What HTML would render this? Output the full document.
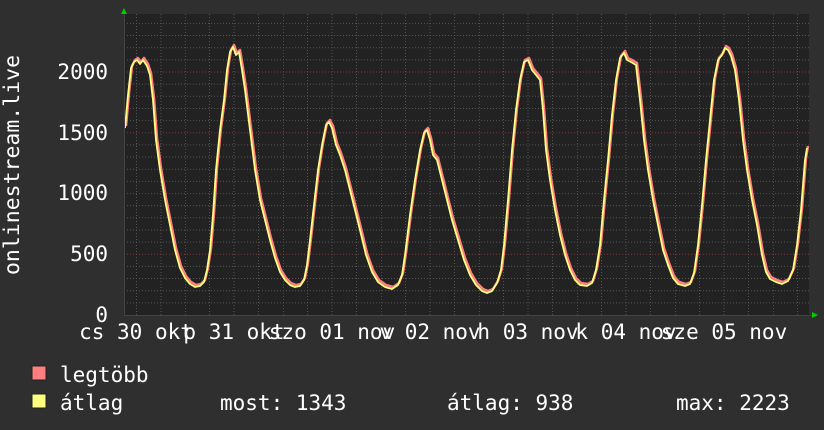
<!DOCTYPE html>
<html><head><meta charset="utf-8"><style>
html,body{margin:0;padding:0;background:#2f2f2f;width:824px;height:430px;overflow:hidden}
text{font-family:"DejaVu Sans Mono","Liberation Mono",monospace;fill:#fff;font-size:21px}
</style></head><body>
<svg width="824" height="430" xmlns="http://www.w3.org/2000/svg">
<rect x="0" y="0" width="824" height="430" fill="#2f2f2f"/>
<rect x="124" y="14" width="685" height="301" fill="#222222"/>
<g stroke="#555" stroke-width="1" stroke-dasharray="1,2">
<line x1="124" x2="809" y1="302.85" y2="302.85"/><line x1="124" x2="809" y1="290.7" y2="290.7"/><line x1="124" x2="809" y1="278.55" y2="278.55"/><line x1="124" x2="809" y1="266.4" y2="266.4"/>
<line x1="124" x2="809" y1="242.1" y2="242.1"/><line x1="124" x2="809" y1="229.95" y2="229.95"/><line x1="124" x2="809" y1="217.8" y2="217.8"/><line x1="124" x2="809" y1="205.65" y2="205.65"/>
<line x1="124" x2="809" y1="181.35" y2="181.35"/><line x1="124" x2="809" y1="169.2" y2="169.2"/><line x1="124" x2="809" y1="157.05" y2="157.05"/><line x1="124" x2="809" y1="144.9" y2="144.9"/>
<line x1="124" x2="809" y1="120.6" y2="120.6"/><line x1="124" x2="809" y1="108.45" y2="108.45"/><line x1="124" x2="809" y1="96.3" y2="96.3"/><line x1="124" x2="809" y1="84.15" y2="84.15"/>
<line x1="124" x2="809" y1="59.85" y2="59.85"/><line x1="124" x2="809" y1="47.7" y2="47.7"/><line x1="124" x2="809" y1="35.55" y2="35.55"/><line x1="124" x2="809" y1="23.4" y2="23.4"/>
<line y1="14" y2="315" x1="136.5" x2="136.5"/><line y1="14" y2="315" x1="161" x2="161"/><line y1="14" y2="315" x1="209.5" x2="209.5"/><line y1="14" y2="315" x1="234" x2="234"/><line y1="14" y2="315" x1="258.5" x2="258.5"/>
<line y1="14" y2="315" x1="307.5" x2="307.5"/><line y1="14" y2="315" x1="332" x2="332"/><line y1="14" y2="315" x1="356.5" x2="356.5"/>
<line y1="14" y2="315" x1="405.5" x2="405.5"/><line y1="14" y2="315" x1="430" x2="430"/><line y1="14" y2="315" x1="454.5" x2="454.5"/>
<line y1="14" y2="315" x1="503.5" x2="503.5"/><line y1="14" y2="315" x1="528" x2="528"/><line y1="14" y2="315" x1="552.5" x2="552.5"/>
<line y1="14" y2="315" x1="601.5" x2="601.5"/><line y1="14" y2="315" x1="626" x2="626"/><line y1="14" y2="315" x1="650.5" x2="650.5"/>
<line y1="14" y2="315" x1="699.5" x2="699.5"/><line y1="14" y2="315" x1="724" x2="724"/><line y1="14" y2="315" x1="748.5" x2="748.5"/>
<line y1="14" y2="315" x1="797.5" x2="797.5"/>
</g>
<g stroke="#7a3a3a" stroke-width="1" stroke-dasharray="1,2">
<line x1="124" x2="809" y1="254.25" y2="254.25"/><line x1="124" x2="809" y1="193.5" y2="193.5"/><line x1="124" x2="809" y1="132.75" y2="132.75"/><line x1="124" x2="809" y1="72" y2="72"/>
<line y1="14" y2="315" x1="185.5" x2="185.5"/><line y1="14" y2="315" x1="283.5" x2="283.5"/><line y1="14" y2="315" x1="381.5" x2="381.5"/><line y1="14" y2="315" x1="479.5" x2="479.5"/><line y1="14" y2="315" x1="577.5" x2="577.5"/><line y1="14" y2="315" x1="675.5" x2="675.5"/><line y1="14" y2="315" x1="773.5" x2="773.5"/>
</g>
<g fill="none" stroke-linejoin="round">
<polyline stroke="#ff7f7f" stroke-width="2.5" transform="translate(1,-2)" points="125,128 128,95 131,68 134,62 137,60 140,64 143,60 147,66 150,75 153,100 156,140 160,170 165,200 170,225 175,250 180,268 185,278 190,284 195,287 200,286 204,282 207,270 210,250 213,215 216,170 220,130 224,100 227,70 230,52 233,47 236,55 239,52 242,70 245,90 250,130 255,170 260,200 265,220 270,240 275,258 280,272 285,280 290,285 295,287 300,286 304,280 307,265 310,240 314,205 318,170 322,145 326,125 329,122 332,128 336,145 340,155 345,170 350,190 355,210 360,230 366,255 372,272 378,282 385,287 392,289 398,285 402,275 405,255 410,215 415,180 420,150 424,133 427,130 430,140 433,155 437,160 442,180 447,200 452,220 458,240 464,260 470,275 476,285 482,291 487,293 492,291 497,283 501,270 504,245 508,200 512,150 516,110 520,80 524,62 528,60 532,70 536,75 540,80 543,110 546,150 550,180 555,210 560,235 565,255 570,270 575,280 580,285 587,286 592,283 596,270 600,245 604,200 608,160 612,115 616,80 620,58 624,53 627,60 631,62 636,65 640,100 644,140 648,170 653,200 658,225 663,250 668,265 673,278 678,284 685,286 690,284 694,273 698,245 702,205 706,160 710,120 714,80 718,60 722,55 725,48 728,50 731,56 735,70 739,100 743,140 747,170 752,200 757,225 762,255 766,272 770,279 776,282 782,284 788,281 793,270 797,245 801,210 805,160 807,148"/>
<polyline stroke="#ffff7f" stroke-width="1.8" points="125,128 128,95 131,68 134,62 137,60 140,64 143,60 147,66 150,75 153,100 156,140 160,170 165,200 170,225 175,250 180,268 185,278 190,284 195,287 200,286 204,282 207,270 210,250 213,215 216,170 220,130 224,100 227,70 230,52 233,47 236,55 239,52 242,70 245,90 250,130 255,170 260,200 265,220 270,240 275,258 280,272 285,280 290,285 295,287 300,286 304,280 307,265 310,240 314,205 318,170 322,145 326,125 329,122 332,128 336,145 340,155 345,170 350,190 355,210 360,230 366,255 372,272 378,282 385,287 392,289 398,285 402,275 405,255 410,215 415,180 420,150 424,133 427,130 430,140 433,155 437,160 442,180 447,200 452,220 458,240 464,260 470,275 476,285 482,291 487,293 492,291 497,283 501,270 504,245 508,200 512,150 516,110 520,80 524,62 528,60 532,70 536,75 540,80 543,110 546,150 550,180 555,210 560,235 565,255 570,270 575,280 580,285 587,286 592,283 596,270 600,245 604,200 608,160 612,115 616,80 620,58 624,53 627,60 631,62 636,65 640,100 644,140 648,170 653,200 658,225 663,250 668,265 673,278 678,284 685,286 690,284 694,273 698,245 702,205 706,160 710,120 714,80 718,60 722,55 725,48 728,50 731,56 735,70 739,100 743,140 747,170 752,200 757,225 762,255 766,272 770,279 776,282 782,284 788,281 793,270 797,245 801,210 805,160 807,148"/>
</g>
<line x1="124" x2="812" y1="315.5" y2="315.5" stroke="#444"/>
<line x1="124.5" x2="124.5" y1="12" y2="315" stroke="#444"/>
<polygon points="121,14 124,8 127,14" fill="#00cc00"/>
<polygon points="812,312 818,315 812,318" fill="#00cc00"/>
<g text-anchor="end">
<text x="108" y="79">2000</text><text x="108" y="140">1500</text><text x="108" y="200">1000</text><text x="108" y="261">500</text><text x="108" y="322">0</text>
</g>
<text transform="translate(19,165) rotate(-90)" text-anchor="middle" style="font-size:21.5px">onlinestream.live</text>
<g text-anchor="middle">
<text x="136" y="339">cs 30 okt</text><text x="234" y="339">p 31 okt</text><text x="332" y="339">szo 01 nov</text><text x="430" y="339">v 02 nov</text><text x="528" y="339">h 03 nov</text><text x="626" y="339">k 04 nov</text><text x="724" y="339">sze 05 nov</text>
</g>
<rect x="32" y="366" width="14" height="14" fill="#ff7f7f" stroke="#222"/>
<rect x="32" y="394" width="14" height="14" fill="#ffff7f" stroke="#222"/>
<text x="60" y="382">legtöbb</text>
<text x="60" y="410">átlag</text>
<text x="220" y="410">most: 1343</text>
<text x="447" y="410">átlag: 938</text>
<text x="676" y="410">max: 2223</text>
</svg>
</body></html>
